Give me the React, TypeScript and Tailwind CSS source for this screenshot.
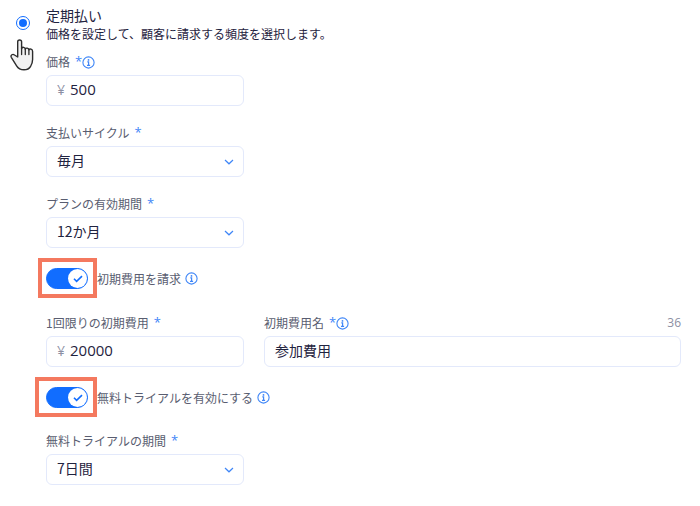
import { useId, useState } from "react"
import type { ReactNode } from "react"

const labelStyle = "text-xs leading-4 text-[#595d70]"
const fieldStyle =
  "h-[31px] w-full rounded-md border border-[#e3e9fb] bg-white pb-[3px] text-sm text-[#1f2340] outline-none focus:border-[#116dff]"
const latinFont = "font-['Open_Sans','Noto_Sans_CJK_JP',sans-serif]"

function InfoIcon() {
  return (
    <svg viewBox="0 0 13 13" className="h-[13px] w-[13px] shrink-0" fill="none" aria-hidden="true">
      <circle cx="6.5" cy="6.5" r="5.6" stroke="#3f86f7" strokeWidth="1.1" />
      <circle cx="6.5" cy="3.9" r="0.9" fill="#3f86f7" />
      <path d="M5.3 5.9h1.3v3.4M5 9.4h3.1" stroke="#3f86f7" strokeWidth="1.2" />
    </svg>
  )
}

function Chevron() {
  return (
    <svg
      viewBox="0 0 10 6"
      className="pointer-events-none absolute right-2.5 top-[13px] h-1.5 w-2.5"
      fill="none"
      aria-hidden="true"
    >
      <path d="M1 1l4 3.8L9 1" stroke="#3f86f7" strokeWidth="1.2" />
    </svg>
  )
}

function HandPointer() {
  return (
    <svg
      viewBox="0 0 24 32"
      className="pointer-events-none absolute -left-1.5 top-8 h-8 w-6"
      aria-hidden="true"
    >
      <path
        d="M7.7 18V2.8c0-2.5 3.9-2.5 3.9 0V9.5c.5-1.8 3.5-1.5 3.7.6.6-1.6 3.4-1.2 3.6.8.8-1.5 3.7-.9 3.7 1.5v8.1c0 3.4-1 5-2 6.8-1.3 2.3-3.6 3.5-6.6 3.5-3.6 0-5.7-1.2-7.4-4L1.3 18.3c-1.1-2.3 1.5-3.8 3.2-2.3z"
        fill="#f1f1f1"
        stroke="#2d2d2d"
        strokeWidth="1.4"
        strokeLinejoin="round"
      />
      <path
        d="M11.6 9v6.5M15.3 10v5.500M18.9 11v4.5"
        stroke="#2d2d2d"
        strokeWidth="1.3"
        strokeLinecap="round"
      />
    </svg>
  )
}

type FieldProps = {
  id: string
  label: string
  info?: boolean
  counter?: number
  children: ReactNode
}

function Field({ id, label, info, counter, children }: FieldProps) {
  return (
    <div className="flex flex-col gap-[5px]">
      <div className="flex h-4 items-center">
        <label htmlFor={id} className={`flex ${labelStyle}`}>
          {label}
          <span className={`ml-[5px] w-[7px] text-[13px] leading-[14px] text-[#3f86f7] ${latinFont}`}>*</span>
        </label>
        {info && <InfoIcon />}
        {counter !== undefined && (
          <span className={`ml-auto text-xs leading-4 text-[#8c8fa3] ${latinFont}`}>{counter}</span>
        )}
      </div>
      {children}
    </div>
  )
}

function PriceField({ label, value, info }: { label: string; value: string; info?: boolean }) {
  const id = useId()
  return (
    <Field id={id} label={label} info={info}>
      <div className="relative">
        <span className="pointer-events-none absolute left-[11px] top-[5px] font-['Open_Sans'] text-sm leading-5 text-[#8c8fa3]">
          ¥
        </span>
        <input
          id={id}
          type="text"
          inputMode="numeric"
          defaultValue={value}
          className={`${fieldStyle} pl-[23px] pr-2.5 text-[15px] ${latinFont}`}
        />
      </div>
    </Field>
  )
}

function SelectField({ label, options }: { label: string; options: string[] }) {
  const id = useId()
  return (
    <Field id={id} label={label}>
      <div className="relative">
        <select id={id} className={`${fieldStyle} appearance-none pl-2.5 pr-6`}>
          {options.map((option) => (
            <option key={option}>{option}</option>
          ))}
        </select>
        <Chevron />
      </div>
    </Field>
  )
}

function Toggle({ label, highlight }: { label: string; highlight: string }) {
  const [checked, setChecked] = useState(true)
  return (
    <div className="relative flex items-center">
      <label className="flex cursor-pointer items-center gap-[9px]">
        <input
          type="checkbox"
          role="switch"
          checked={checked}
          onChange={(e) => setChecked(e.target.checked)}
          className="sr-only"
        />
        <span
          className={`flex h-[21px] w-[42px] items-center rounded-full border ${
            checked ? "justify-end border-[#116dff] bg-[#116dff]" : "justify-start border-gray-300 bg-gray-300"
          }`}
        >
          <span className="flex h-[19px] w-[19px] items-center justify-center rounded-full bg-white">
            {checked && (
              <svg viewBox="0 0 10 8" className="h-2 w-2.5" fill="none" aria-hidden="true">
                <path d="M1 3.8l2.6 2.6L9 1.2" stroke="#116dff" strokeWidth="1.6" />
              </svg>
            )}
          </span>
        </span>
        <span className={labelStyle}>{label}</span>
      </label>
      <span className="ml-1">
        <InfoIcon />
      </span>
      <span className={`pointer-events-none absolute border-4 border-[#f4795f] ${highlight}`} />
    </div>
  )
}

export default function App() {
  return (
    <main className="flex gap-4 bg-white py-[7px] pl-4 pr-[19px] font-['Noto_Sans_CJK_JP',sans-serif]">
      <div className="relative w-3.5 shrink-0 pt-[9px]">
        <input
          id="recurring"
          type="radio"
          name="billing"
          defaultChecked
          className="block h-3.5 w-3.5 appearance-none rounded-full border border-[#116dff] bg-white bg-clip-content p-0.5 checked:bg-[#116dff]"
        />
        <HandPointer />
      </div>

      <div className="min-w-0 flex-1">
        <label htmlFor="recurring" className="mb-0.5 block text-sm leading-4 text-[#1f2340]">
          定期払い
        </label>
        <p className="text-xs leading-[18px] text-[#1f2340]">
          価格を設定して、顧客に請求する頻度を選択します。
        </p>

        <div className="mt-[11px] flex w-[198px] flex-col gap-[19px]">
          <PriceField label="価格" value="500" info />
          <SelectField label="支払いサイクル" options={["毎月", "毎週", "毎年"]} />
          <SelectField label="プランの有効期間" options={["12か月", "6か月", "3か月"]} />
        </div>

        <div className="mt-5">
          <Toggle label="初期費用を請求" highlight="-left-2 -top-2.5 h-10 w-[59px]" />
        </div>

        <div className="mt-[26px] flex gap-5">
          <div className="w-[198px] shrink-0">
            <PriceField label="1回限りの初期費用" value="20000" />
          </div>
          <div className="min-w-0 flex-1">
            <Field id="fee-name" label="初期費用名" info counter={36}>
              <input
                id="fee-name"
                type="text"
                maxLength={40}
                defaultValue="参加費用"
                className={`${fieldStyle} px-2.5`}
              />
            </Field>
          </div>
        </div>

        <div className="mt-5">
          <Toggle label="無料トライアルを有効にする" highlight="-left-[11px] -top-2.5 h-10 w-[62px]" />
        </div>

        <div className="mt-[25px] w-[198px]">
          <SelectField label="無料トライアルの期間" options={["7日間", "14日間", "30日間"]} />
        </div>
      </div>
    </main>
  )
}
